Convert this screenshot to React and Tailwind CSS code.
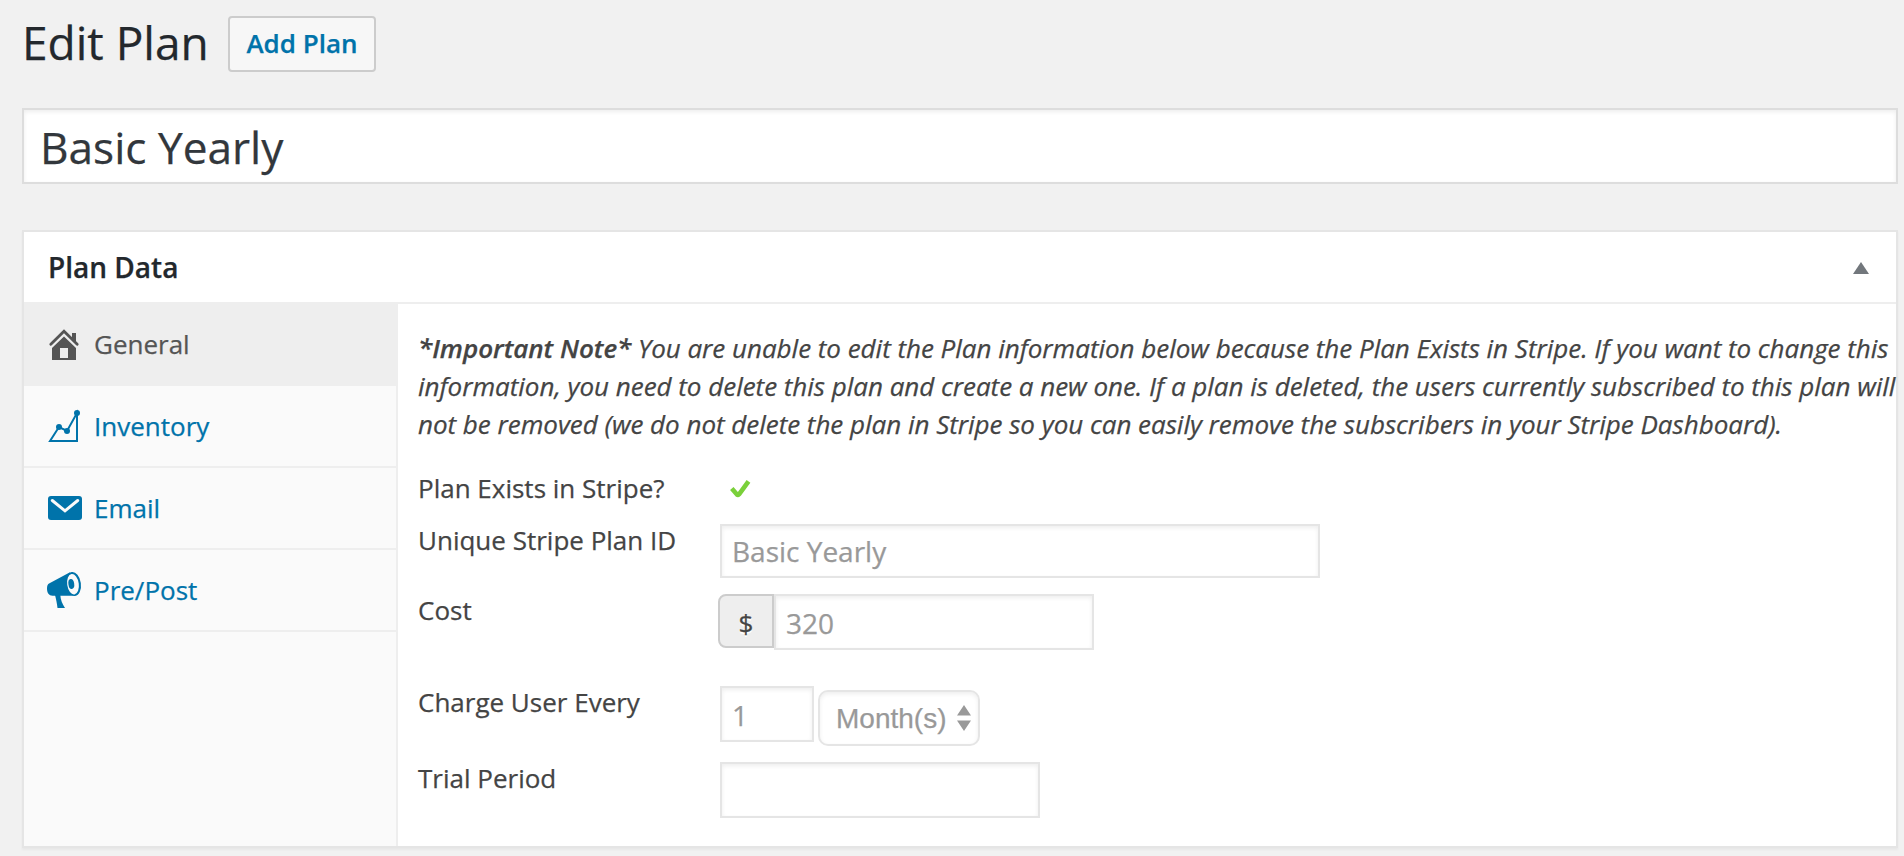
const inset = 'shadow-[inset_0_2px_4px_rgba(0,0,0,0.07)]';

const HomeIcon = () => (
  <svg viewBox="44 324 40 40" className="size-10">
    <path d="M72 333h4v9l-4-4z" fill="#555" />
    <path d="M50.8 344.2 64 331.2l13.2 13" fill="none" stroke="#555" strokeWidth="2.8" strokeLinecap="round" />
    <path fillRule="evenodd" d="M52 348l12-11.6L76 348v12H52zM60 348v10h8v-10z" fill="#555" />
  </svg>
);

const ChartIcon = () => (
  <svg viewBox="44 406 40 40" className="size-10">
    <path d="M50 441 59 427l8 4 10-18v28z" fill="none" stroke="#0073aa" strokeWidth="2" />
    <g fill="#0073aa">
      <circle cx="59" cy="427" r="3" />
      <circle cx="67" cy="431" r="3" />
      <circle cx="77" cy="413" r="3" />
    </g>
  </svg>
);

const MailIcon = () => (
  <svg viewBox="44 488 40 40" className="size-10">
    <rect x="48" y="496" width="34" height="24" rx="3" fill="#0073aa" />
    <path d="M52.3 500.5 65 510.8l12.7-10.3" fill="none" stroke="#fafafa" strokeWidth="3" strokeLinecap="round" />
  </svg>
);

const MegaphoneIcon = () => (
  <svg viewBox="44 570 40 40" className="size-10">
    <path d="M70 572.3 49.5 583.3c-2 1-2.500 2.500-2.500 5.200 0 4.500 2 7.200 5.500 7.200H75z" fill="#0073aa" />
    <path d="M55 595h5.300c.2 5 2.200 9 4.700 13h-7.500c-.5-5-1.500-9-2.500-13z" fill="#0073aa" />
    <ellipse cx="73.400" cy="584" rx="7.500" ry="12" transform="rotate(-8 73.400 584)" fill="#0073aa" />
    <ellipse cx="73" cy="584.200" rx="5.800" ry="10.300" transform="rotate(-8 73 584.200)" fill="#fafafa" />
    <ellipse cx="71.300" cy="584" rx="2.900" ry="5" transform="rotate(-8 71.300 584)" fill="#0073aa" />
  </svg>
);

const tabs = [
  { label: 'General', Icon: HomeIcon, active: true },
  { label: 'Inventory', Icon: ChartIcon },
  { label: 'Email', Icon: MailIcon },
  { label: 'Pre/Post', Icon: MegaphoneIcon },
];

const Row = ({ label, className, children }) => (
  <div className={`flex items-start ${className}`}>
    <label className="w-[302px] shrink-0">{label}</label>
    {children}
  </div>
);

const field = `mt-[3px] border-2 border-[#e5e5e5] bg-white px-[10px] text-[28px] text-[#999] outline-none ${inset}`;

export default function App() {
  return (
    <div className="h-[856px] w-[1904px] overflow-hidden bg-[#f1f1f1] pl-[22px] pr-[6px] font-['Open_Sans',sans-serif] text-[26px] leading-[38px] text-[#444] [-webkit-text-stroke:0.25px]">
      <header className="flex h-[108px] items-start pt-4">
        <h1 className="-mt-0.5 w-[206px] whitespace-nowrap text-[46px] leading-[56px] text-[#23282d]">Edit Plan</h1>
        <button className="h-14 w-[148px] rounded-[4px] border-2 border-[#ccc] bg-[#f7f7f7] pb-0.5 text-[26px] font-semibold leading-[50px] text-[#0073aa]">
          Add Plan
        </button>
      </header>

      <input
        readOnly
        value="Basic Yearly"
        className={`block h-[76px] w-full border-2 border-[#ddd] bg-white px-4 pt-0.5 text-[44.200px] text-[#32373c] outline-none ${inset}`}
      />

      <section className="mt-[46px] h-[618px] border-2 border-[#e5e5e5] bg-white shadow-[0_2px_2px_rgba(0,0,0,0.04)]">
        <div className="flex h-[72px] items-center justify-between border-b-2 border-[#eee] pl-6 pr-[27px]">
          <h2 className="text-[28px] font-semibold text-[#23282d]">Plan Data</h2>
          <svg viewBox="0 0 16 12" className="mt-0.5 h-3 w-4">
            <path d="M8 0l8 12H0z" fill="#72777c" />
          </svg>
        </div>

        <div className="flex h-[542px]">
          <nav className="w-[374px] shrink-0 border-r-2 border-[#eee] bg-[#fafafa]">
            {tabs.map(({ label, Icon, active }) => (
              <a
                key={label}
                className={`flex h-[82px] items-center gap-2.5 border-b-2 border-[#eee] pl-5 ${active ? 'bg-[#eee] text-[#555]' : 'text-[#0073aa]'}`}
              >
                <Icon />
                <span>{label}</span>
              </a>
            ))}
          </nav>

          <div className="min-w-0 flex-1 pl-5 pt-[25px]">
            <p className="mb-[26px] whitespace-nowrap italic tracking-[-0.025px]">
              <strong className="font-semibold">*Important Note*</strong> You are unable to edit the Plan information below because the Plan Exists in Stripe. If you want to change this
              <br />
              information, you need to delete this plan and create a new one. If a plan is deleted, the users currently subscribed to this plan will
              <br />
              not be removed (we do not delete the plan in Stripe so you can easily remove the subscribers in your Stripe Dashboard).
            </p>

            <Row label="Plan Exists in Stripe?" className="h-[52px]">
              <svg viewBox="720 470 40 40" className="size-10">
                <path d="M731.8 489.600 737 495.600Q738 496.600 739 495.400L748.500 482.300" fill="none" stroke="#7ad03a" strokeWidth="4.600" strokeLinejoin="round" />
              </svg>
            </Row>
            <Row label="Unique Stripe Plan ID" className="h-[70px]">
              <input readOnly value="Basic Yearly" className={`h-[54px] w-[600px] ${field}`} />
            </Row>
            <Row label="Cost" className="h-[92px]">
              <span className="-ml-0.5 mt-[3px] h-[54px] w-14 rounded-l-[8px] border-2 border-[#ccc] bg-[#eee] text-center leading-[54px] [text-shadow:0_2px_0_#fff]">
                $
              </span>
              <input readOnly value="320" className={`h-14 w-80 pt-0.5 ${field}`} />
            </Row>
            <Row label="Charge User Every" className="h-[76px]">
              <input readOnly value="1" className={`h-14 w-[94px] pt-0.5 ${field}`} />
              <div className={`ml-1 mt-[7px] flex h-14 w-[162px] items-center justify-between rounded-[10px] border-2 border-[#e5e5e5] bg-white pl-4 pr-[7px] ${inset}`}>
                <span className="mt-0.5 font-['Liberation_Sans',sans-serif] text-[28px] text-[#999]">Month(s)</span>
                <svg viewBox="0 0 14 26" className="h-[26px] w-3.5">
                  <path d="M7 0l7 10.500H0zM7 26l7-10.500H0z" fill="#999" />
                </svg>
              </div>
            </Row>
            <Row label="Trial Period">
              <input readOnly value="" className={`h-14 w-80 ${field}`} />
            </Row>
          </div>
        </div>
      </section>
    </div>
  );
}
